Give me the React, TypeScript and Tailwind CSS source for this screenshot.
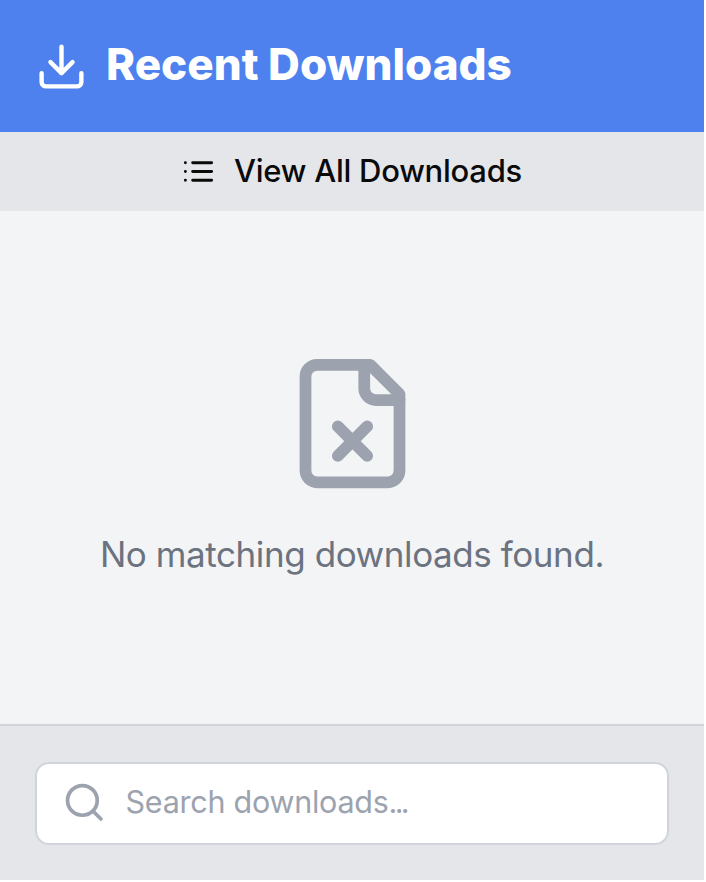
export default function App() {
  return (
    <div className="flex h-[880px] w-[704px] flex-col overflow-hidden bg-[#f3f4f6] font-['Inter','Liberation_Sans',sans-serif]">
      <header className="flex h-[132px] shrink-0 items-center bg-[#4e81ee] pl-[35px] text-white">
        <svg className="mt-px size-[53px] shrink-0" viewBox="0 0 24 24" fill="none" stroke="currentColor" strokeWidth="2" strokeLinecap="round" strokeLinejoin="round">
          <path d="M21 15v4a2 2 0 0 1-2 2H5a2 2 0 0 1-2-2v-4M7 10l5 5 5-5M12 15V3" />
        </svg>
        <h1 className="mb-1 ml-[18px] text-[44px] leading-none font-extrabold whitespace-nowrap">Recent Downloads</h1>
      </header>
      <button className="flex h-[79px] shrink-0 items-center bg-[#e5e6ea] pl-[181px] text-[#0a0a0a]">
        <svg className="size-[35px] shrink-0" viewBox="0 0 24 24" fill="none" stroke="currentColor" strokeWidth="2" strokeLinecap="round">
          <path d="M8 6h13M8 12h13M8 18h13M3 6h.01M3 12h.01M3 18h.01" />
        </svg>
        <span className="mb-0.5 ml-[18px] text-[31px] leading-none font-medium tracking-[-0.25px] whitespace-nowrap">View All Downloads</span>
      </button>
      <main className="flex h-[513px] shrink-0 flex-col items-center pt-[142px]">
        <svg className="size-[141px]" viewBox="0 0 24 24" fill="none" stroke="#9ca3af" strokeWidth="2" strokeLinecap="round" strokeLinejoin="round">
          <path d="M15 2H6a2 2 0 0 0-2 2v16a2 2 0 0 0 2 2h12a2 2 0 0 0 2-2V7Z" />
          <path d="M14 2v4a2 2 0 0 0 2 2h4M14.5 12.5l-5 5M9.5 12.5l5 5" />
        </svg>
        <p className="mt-[38px] text-[35px] leading-[44px] tracking-[-0.42px] whitespace-nowrap text-[#6b7280]">No matching downloads found.</p>
      </main>
      <footer className="flex grow items-start border-t-2 border-[#d1d5db] bg-[#e5e6ea] px-[35px] pt-9">
        <label className="flex h-[83px] w-[634px] items-center rounded-[14px] border-2 border-[#d1d5db] bg-white pl-[25px] text-[#9ca3af]">
          <svg className="mb-0.5 size-[44.5px] shrink-0" viewBox="0 0 24 24" fill="none" stroke="currentColor" strokeWidth="2" strokeLinecap="round">
            <circle cx="11" cy="11" r="8" />
            <path d="m21 21-4.3-4.3" />
          </svg>
          <span className="mb-0.5 ml-[19px] text-[30.5px] leading-none tracking-[-0.25px] whitespace-nowrap">
            Search downloads<span className="tracking-[-2.7px]">...</span>
          </span>
        </label>
      </footer>
    </div>
  );
}
